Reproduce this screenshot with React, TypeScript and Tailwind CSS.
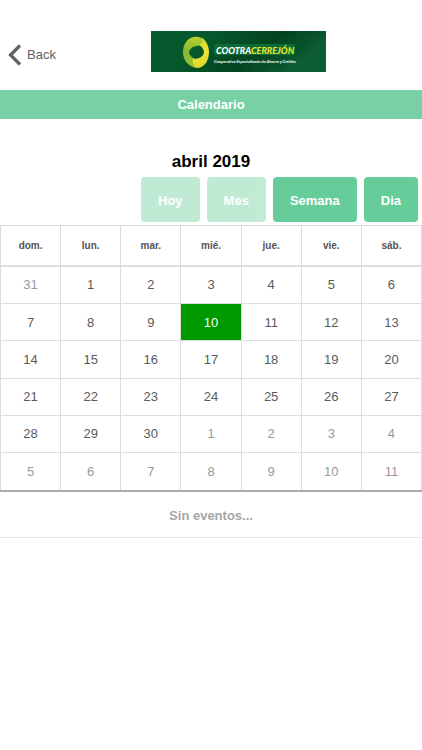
import React from "react";

const days = ["dom.", "lun.", "mar.", "mié.", "jue.", "vie.", "sáb."];

const weeks = [
  [31, 1, 2, 3, 4, 5, 6],
  [7, 8, 9, 10, 11, 12, 13],
  [14, 15, 16, 17, 18, 19, 20],
  [21, 22, 23, 24, 25, 26, 27],
  [28, 29, 30, 1, 2, 3, 4],
  [5, 6, 7, 8, 9, 10, 11],
];

const views = [
  { label: "Hoy", disabled: true },
  { label: "Mes", disabled: true },
  { label: "Semana", disabled: false },
  { label: "Dia", disabled: false },
];

function cellStyle(week: number, day: number) {
  if ((week === 0 && day > 20) || (week > 3 && day < 20)) return "text-[#999999]";
  if (week === 1 && day === 10) return "bg-[#009a00] text-white";
  return "text-[#5a5a5a]";
}

function Logo() {
  return (
    <svg viewBox="0 0 175 41" className="h-[41px] w-[175px]" role="img" aria-label="Cootracerrejón">
      <defs>
        <linearGradient id="panel" x1="0" y1="0" x2="1" y2="0.3">
          <stop offset="0" stopColor="#045a2d" />
          <stop offset="0.35" stopColor="#07592c" />
          <stop offset="0.7" stopColor="#03441f" />
          <stop offset="1" stopColor="#0b5a31" />
        </linearGradient>
        <linearGradient id="left" x1="0" y1="0" x2="0" y2="1">
          <stop offset="0" stopColor="#b9d02f" />
          <stop offset="0.5" stopColor="#86b632" />
          <stop offset="1" stopColor="#9cc230" />
        </linearGradient>
        <linearGradient id="right" x1="0" y1="0" x2="0" y2="1">
          <stop offset="0" stopColor="#c9d82f" />
          <stop offset="0.4" stopColor="#eee338" />
          <stop offset="1" stopColor="#dcda2c" />
        </linearGradient>
      </defs>
      <rect width="175" height="41" fill="url(#panel)" />
      <path d="M128 41L175 4V41Z" fill="#176b3f" opacity="0.2" />
      <path d="M48 6C38 4 32 12 32 21C32 30 38 36 46 37C43 34 42 31 43 28C40 26 38 23 38 21C39 18 42 15 46 15C50 14 52 15 53 17C54 12 53 8 48 6Z" fill="url(#left)" />
      <path d="M50 6C55 9 58 15 58 21C58 30 53 37 46 37C42 35 41 31 42 27C43 28 46 28 48 27C51 26 53 23 53 21C53 18 50 15 48 14C52 12 52 9 50 6Z" fill="url(#right)" />
      <rect x="63" y="13" width="81" height="11" fill="#0b6b39" />
      <text x="65" y="23" fontSize="9" fontWeight="900" fontStyle="italic" fill="#ffffff" className="font-['Lato',sans-serif]">
        COOTRA<tspan fill="#e4e52b">CERREJÓN</tspan>
      </text>
      <text x="63" y="32" fontSize="4.2" fontWeight="900" fontStyle="italic" fill="#e6f1e9" className="font-['Lato',sans-serif]">
        Cooperativa Especializada de Ahorro y Crédito
      </text>
    </svg>
  );
}

export default function App() {
  return (
    <div className="min-h-screen bg-white font-['Liberation_Sans',Arial,sans-serif] text-[13px]">
      <header className="grid h-[90px] grid-cols-[151px_1fr] items-start pt-[31px]">
        <button className="flex h-12 items-center gap-[5px] pl-2 text-[#606060]">
          <svg viewBox="0 0 14 22" className="h-[22px] w-[14px]" aria-hidden="true">
            <path d="M12 1.5L2.5 11L12 20.5" fill="none" stroke="currentColor" strokeWidth="3.2" />
          </svg>
          Back
        </button>
        <Logo />
      </header>
      <h1 className="flex h-[29px] items-center justify-center bg-[#77d1a5] font-bold text-white">Calendario</h1>

      <main>
        <h2 className="pt-[31px] text-center text-[17px] leading-6 font-bold text-black">abril 2019</h2>
        <div className="mt-[3px] mb-[3px] flex justify-end gap-[7px] pr-1">
          {views.map((v) => (
            <button
              key={v.label}
              disabled={v.disabled}
              className="h-[45px] rounded bg-[#66cc99] px-[17px] pt-[2px] font-bold text-white disabled:opacity-40"
            >
              {v.label}
            </button>
          ))}
        </div>

        <table className="h-[267px] w-full table-fixed border-collapse text-center">
          <thead>
            <tr className="h-10 text-[10px] text-[#555555]">
              {days.map((d) => (
                <th key={d} scope="col" className="border border-b-2 border-[#dddddd] p-0 font-bold">{d}</th>
              ))}
            </tr>
          </thead>
          <tbody>
            {weeks.map((week, w) => (
              <tr key={w} className="last:border-b-2 last:border-[#aaaaaa]">
                {week.map((day) => (
                  <td key={day} className={`border border-[#dddddd] p-0 ${cellStyle(w, day)}`}>{day}</td>
                ))}
              </tr>
            ))}
          </tbody>
        </table>

        <p className="flex h-[46px] items-center justify-center border-b border-[#e8e8e8] pt-[2px] font-bold text-[#a6a6a6]">Sin eventos...</p>
      </main>
    </div>
  );
}
